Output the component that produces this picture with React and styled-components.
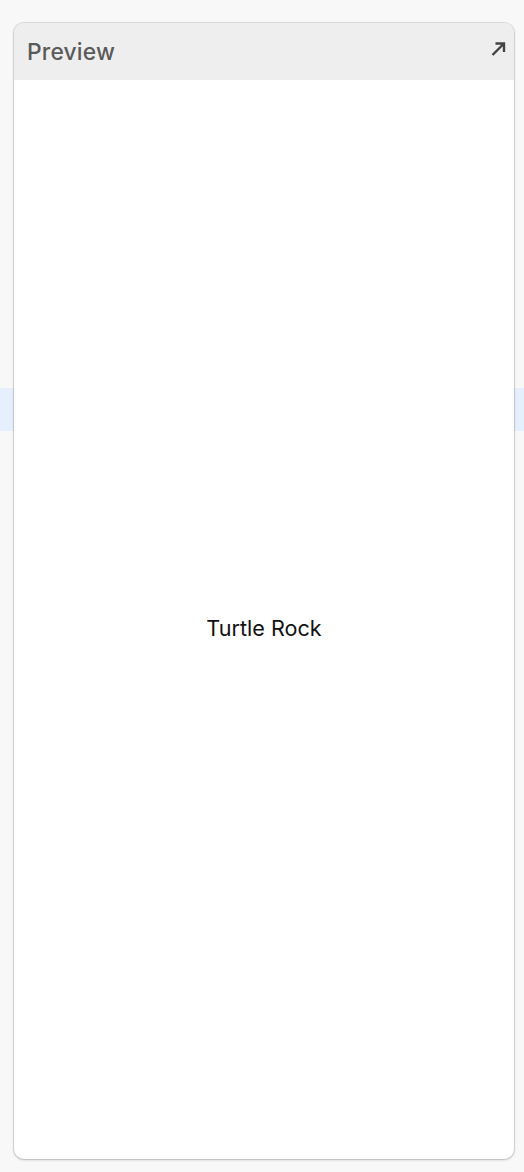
import React from "react";
import styled, { createGlobalStyle } from "styled-components";

const Global = createGlobalStyle`
  html, body {
    margin: 0;
    padding: 0;
  }
  body {
    width: 524px;
    height: 1172px;
    overflow: hidden;
    font-family: Inter, "Open Sans", "Liberation Sans", sans-serif;
    background: linear-gradient(
      to bottom,
      #f8f8f8 0px,
      #f8f8f8 388px,
      #e5effd 388px,
      #e5effd 431px,
      #f8f8f8 431px
    );
  }
`;

const Page = styled.div`
  box-sizing: border-box;
  height: 1172px;
  padding: 23px 10px 13px 14px;
  display: flex;
`;

const Card = styled.section`
  flex: 1;
  display: flex;
  flex-direction: column;
  background: #ffffff;
  border-radius: 10px;
  overflow: hidden;
  box-shadow: 0 0 0 1px rgba(0, 0, 0, 0.1), 0 1px 3px rgba(0, 0, 0, 0.18);
`;

const Header = styled.header`
  height: 57px;
  flex-shrink: 0;
  display: flex;
  align-items: center;
  justify-content: space-between;
  padding: 0 8px 0 13px;
  background: #eeeeee;
`;

const Title = styled.h2`
  margin: 0;
  margin-top: -1px;
  font-size: 22.8px;
  font-weight: 500;
  color: #5a5a5a;
  letter-spacing: 0.2px;
`;

const ExpandButton = styled.button`
  border: none;
  background: none;
  padding: 0;
  margin-top: -6px;
  margin-right: -2px;
  width: 20px;
  height: 20px;
  display: flex;
  align-items: center;
  justify-content: center;
  color: #444;
  cursor: pointer;
`;

const Body = styled.div`
  flex: 1;
  display: flex;
  align-items: center;
  justify-content: center;
  padding-bottom: 4px;
`;

const Label = styled.span`
  font-size: 21.6px;
  color: #111;
  margin-top: 20px;
`;

export default function App() {
  return (
    <>
      <Global />
      <Page>
        <Card>
          <Header>
            <Title>Preview</Title>
            <ExpandButton aria-label="Expand">
              <svg width="16" height="16" viewBox="0 0 16 16" fill="none">
                <path
                  d="M2.5 14 L13.5 3 M5.5 2.5 H14 V11"
                  stroke="currentColor"
                  strokeWidth="2.4"
                  strokeLinecap="butt"
                />
              </svg>
            </ExpandButton>
          </Header>
          <Body>
            <Label>Turtle Rock</Label>
          </Body>
        </Card>
      </Page>
    </>
  );
}
